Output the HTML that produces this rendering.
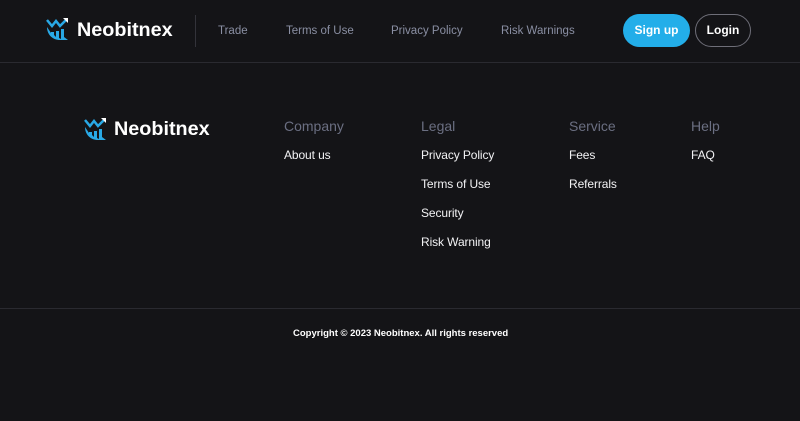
<!DOCTYPE html>
<html><head><meta charset="utf-8"><style>
*{margin:0;padding:0;box-sizing:border-box}
body{width:800px;height:421px;background:#141417;font-family:"Liberation Sans",sans-serif;position:relative;overflow:hidden;color:#fff}
.a{position:absolute;white-space:nowrap}
.nav{font-size:11.5px;color:#8a8fa3;top:25px}
.h{font-size:14px;color:#6b6f82;top:118px}
.l{font-size:12px;color:#f2f2f4;letter-spacing:-0.1px}
.logo{font-weight:bold;font-size:19.8px;letter-spacing:0px}
</style></head><body>
<div class="a" style="left:0;top:62px;width:800px;height:1px;background:#2a2a30"></div>
<div class="a" style="left:195px;top:15px;width:1px;height:32px;background:#33333a"></div>
<svg class="a" style="left:44px;top:17px" width="28" height="26" viewBox="0 0 28 26"><path d="M3 3l5 6 4-5 4 5 7-7" stroke="#29a9e6" stroke-width="2.5" fill="none"/><path d="M19 1h5v5z" fill="#fff"/><path d="M3 10c0 8 6 13 13 13h8l-4-3V12h-3v10l-2-1V14h-3v6l-2-2v-3H7v1z" fill="#29a9e6"/></svg>
<div class="a logo" style="left:77px;top:19px">Neobitnex</div>
<div class="a nav" style="left:218px">Trade</div>
<div class="a nav" style="left:286px">Terms of Use</div>
<div class="a nav" style="left:391px">Privacy Policy</div>
<div class="a nav" style="left:501px">Risk Warnings</div>
<div class="a" style="left:623px;top:14px;width:67px;height:33px;border-radius:17px;background:#23aee9;font-size:12px;font-weight:bold;text-align:center;line-height:33px">Sign up</div>
<div class="a" style="left:695px;top:14px;width:56px;height:33px;border-radius:17px;border:1.5px solid #6e6e78;font-size:12px;font-weight:bold;text-align:center;line-height:30px">Login</div>
<svg class="a" style="left:82px;top:117px" width="28" height="26" viewBox="0 0 28 26"><path d="M3 3l5 6 4-5 4 5 7-7" stroke="#29a9e6" stroke-width="2.5" fill="none"/><path d="M19 1h5v5z" fill="#fff"/><path d="M3 10c0 8 6 13 13 13h8l-4-3V12h-3v10l-2-1V14h-3v6l-2-2v-3H7v1z" fill="#29a9e6"/></svg>
<div class="a logo" style="left:114px;top:118px">Neobitnex</div>
<div class="a h" style="left:284px">Company</div>
<div class="a h" style="left:421px">Legal</div>
<div class="a h" style="left:569px">Service</div>
<div class="a h" style="left:691px">Help</div>
<div class="a l" style="left:284px;top:148px">About us</div>
<div class="a l" style="left:421px;top:148px">Privacy Policy</div>
<div class="a l" style="left:421px;top:177px">Terms of Use</div>
<div class="a l" style="left:421px;top:206px">Security</div>
<div class="a l" style="left:421px;top:235px">Risk Warning</div>
<div class="a l" style="left:569px;top:148px">Fees</div>
<div class="a l" style="left:569px;top:177px">Referrals</div>
<div class="a l" style="left:691px;top:148px">FAQ</div>
<div class="a" style="left:0;top:308px;width:800px;height:1px;background:#2a2a30"></div>
<div class="a" style="left:293px;top:328px;font-size:9.5px;font-weight:bold">Copyright © 2023 Neobitnex. All rights reserved</div>
</body></html>
